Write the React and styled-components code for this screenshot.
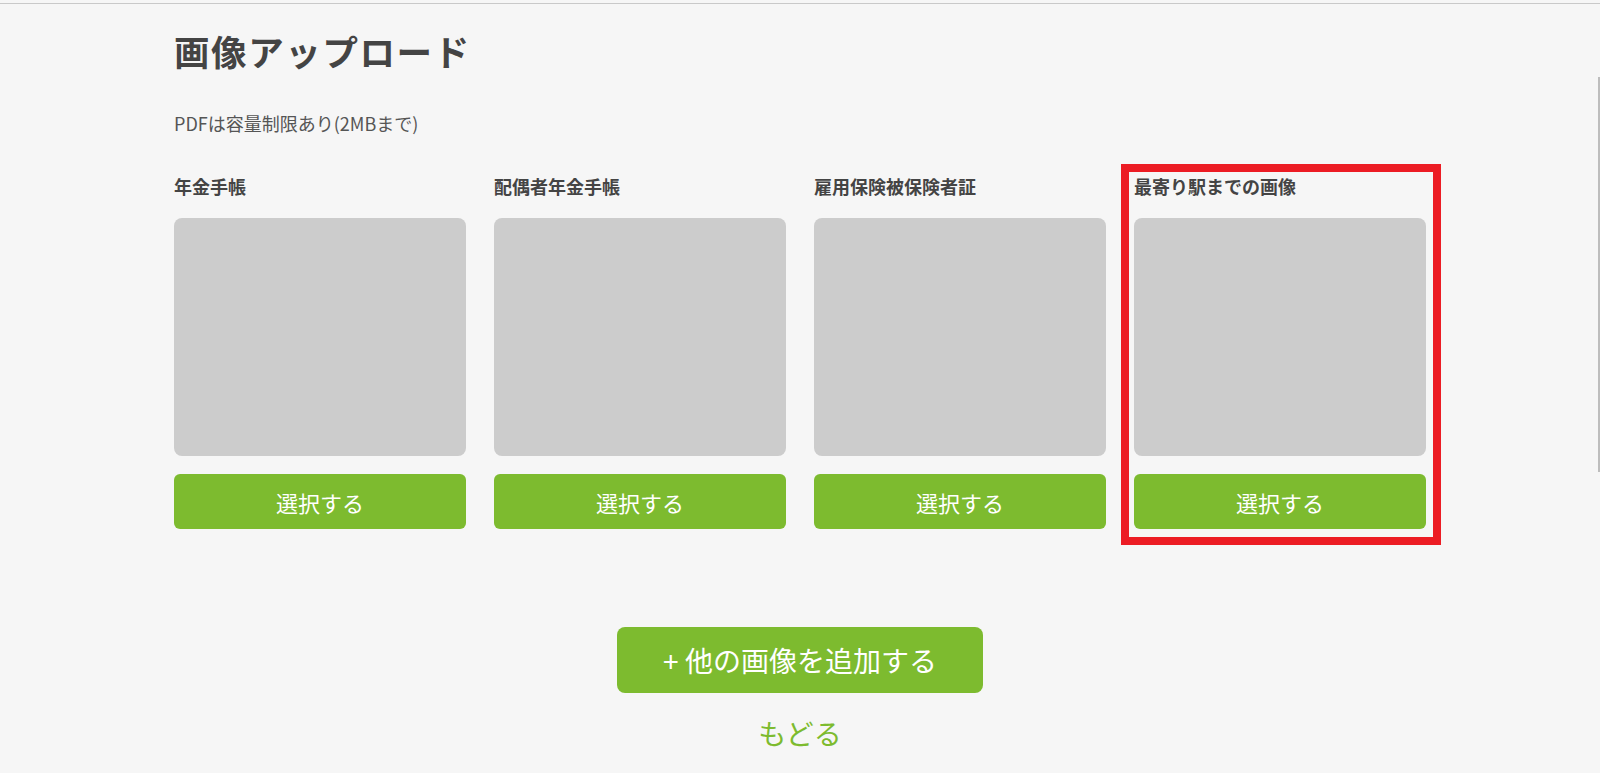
import React from 'react';
import styled, { createGlobalStyle } from 'styled-components';

const GlobalStyle = createGlobalStyle`
  html, body {
    margin: 0;
    padding: 0;
    background: #f6f6f6;
  }
  body {
    font-family: "Noto Sans CJK JP", "Noto Sans", sans-serif;
    color: #444;
  }
`;

const uploads = [
  { id: 'pension', label: '年金手帳' },
  { id: 'spouse', label: '配偶者年金手帳' },
  { id: 'insurance', label: '雇用保険被保険者証' },
  { id: 'station', label: '最寄り駅までの画像', highlighted: true },
];

const App = () => {
  return (
    <>
      <GlobalStyle />
      <TopRule />
      <Page>
        <Title>画像アップロード</Title>
        <Note>PDFは容量制限あり(2MBまで)</Note>

        <UploadGrid>
          {uploads.map((item) => (
            <UploadColumn key={item.id} $highlighted={item.highlighted}>
              <Label>{item.label}</Label>
              <Preview />
              <SelectButton type="button">選択する</SelectButton>
            </UploadColumn>
          ))}
        </UploadGrid>

        <Footer>
          <AddButton type="button">+ 他の画像を追加する</AddButton>
          <BackLink href="#">もどる</BackLink>
        </Footer>
      </Page>
      <ScrollThumb />
    </>
  );
};

export default App;

const TopRule = styled.div`
  margin-top: 3px;
  height: 1px;
  background: #c9c9c9;
`;

const Page = styled.main`
  width: 1252px;
  margin: 0 auto;
  padding-top: 26px;
  padding-bottom: 20px;
`;

const Title = styled.h1`
  margin: 0;
  font-size: 35.5px;
  line-height: 42px;
  font-weight: 700;
  letter-spacing: 1.6px;
  color: #444;
`;

const Note = styled.p`
  margin: 38px 0 0;
  font-size: 18px;
  line-height: 26px;
  color: #555;
`;

const UploadGrid = styled.div`
  display: grid;
  grid-template-columns: repeat(4, 1fr);
  column-gap: 28px;
  margin-top: 37px;
`;

const UploadColumn = styled.div`
  position: relative;
  display: flex;
  flex-direction: column;

  ${({ $highlighted }) =>
    $highlighted &&
    `
    &::after {
      content: '';
      position: absolute;
      top: -9px;
      left: -13px;
      right: -15px;
      bottom: -16px;
      border: 8px solid #ec1c24;
      box-sizing: border-box;
      pointer-events: none;
    }
  `}
`;

const Label = styled.h2`
  margin: 0;
  font-size: 18px;
  line-height: 26px;
  font-weight: 700;
  color: #444;
`;

const Preview = styled.div`
  margin-top: 19px;
  height: 238px;
  border-radius: 8px;
  background: #cccccc;
`;

const SelectButton = styled.button`
  margin-top: 18px;
  height: 55px;
  border: none;
  border-radius: 6px;
  background: #7dbb2f;
  color: #fff;
  font-family: inherit;
  font-size: 22px;
  font-weight: 400;
  cursor: pointer;
`;

const Footer = styled.div`
  display: flex;
  flex-direction: column;
  align-items: center;
  margin-top: 98px;
`;

const AddButton = styled.button`
  width: 366px;
  height: 66px;
  border: none;
  border-radius: 8px;
  background: #7dbb2f;
  color: #fff;
  font-family: inherit;
  font-size: 28px;
  cursor: pointer;
`;

const BackLink = styled.a`
  margin-top: 22px;
  font-size: 28px;
  line-height: 36px;
  color: #7dbb2f;
  text-decoration: none;
`;

const ScrollThumb = styled.div`
  position: fixed;
  top: 77px;
  right: 0;
  width: 2px;
  height: 395px;
  background: #bdbdbd;
`;
